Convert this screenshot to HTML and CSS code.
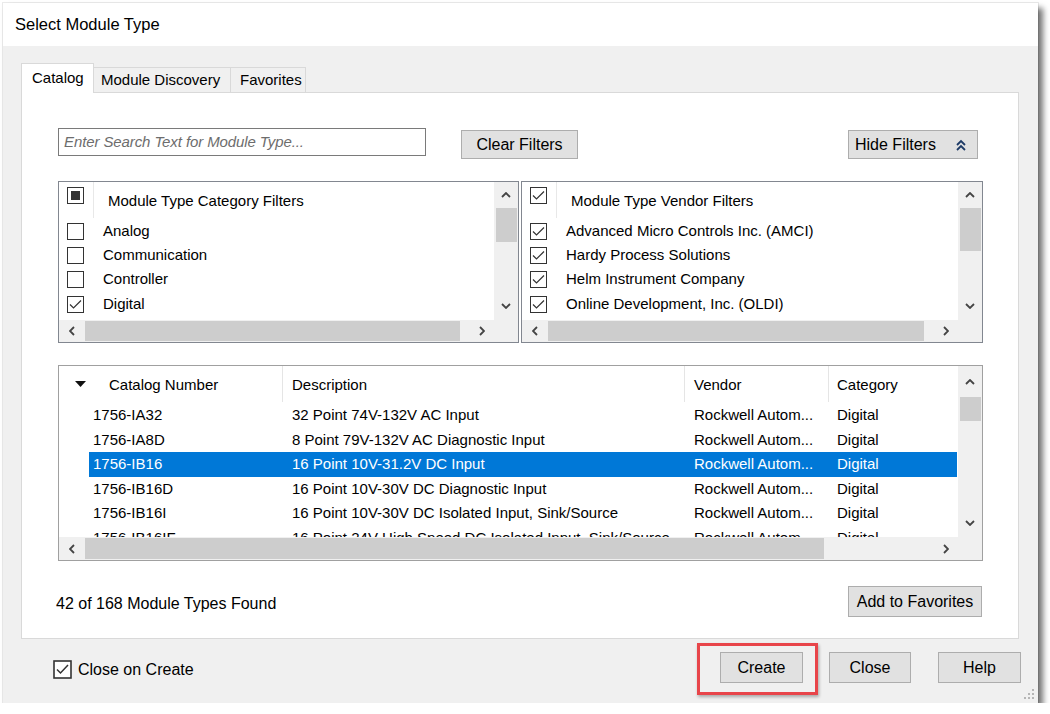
FILE: index.html
```html
<!DOCTYPE html>
<html>
<head>
<meta charset="utf-8">
<link rel="stylesheet" href="styles.css">
</head>
<body>
<div class="window">
  <div class="titlebar">Select Module Type</div>
  <div class="body">
    <div class="tabs">
      <div class="tab sel">Catalog</div>
      <div class="tab md">Module Discovery</div>
      <div class="tab fav">Favorites</div>
    </div>
    <div class="panel">
      <div class="search-row">
        <div class="search">Enter Search Text for Module Type...</div>
        <div class="btn clear">Clear Filters</div>
        <div class="btn hide">Hide Filters
          <svg class="dchev" width="12" height="12" viewBox="0 0 12 12"><polyline points="2,6 6,2 10,6" fill="none" stroke="#1d3a66" stroke-width="1.8"/><polyline points="2,11 6,7 10,11" fill="none" stroke="#1d3a66" stroke-width="1.8"/></svg>
        </div>
      </div>

      <div class="filters">
        <div class="fbox cat">
          <div class="fmain">
            <div class="flist">
              <div class="fhead">
                <svg class="cb hcb" width="17" height="17" viewBox="0 0 17 17"><rect x="0.5" y="0.5" width="16" height="16" fill="#fff" stroke="#333"/><rect x="4" y="4" width="9" height="9" fill="#333"/></svg>
                <div class="fsep"></div>
                <div class="ftitle">Module Type Category Filters</div>
              </div>
              <div class="frow"><svg class="cb" width="17" height="17" viewBox="0 0 17 17"><rect x="0.5" y="0.5" width="16" height="16" fill="#fff" stroke="#333"/></svg><span>Analog</span></div>
              <div class="frow"><svg class="cb" width="17" height="17" viewBox="0 0 17 17"><rect x="0.5" y="0.5" width="16" height="16" fill="#fff" stroke="#333"/></svg><span>Communication</span></div>
              <div class="frow"><svg class="cb" width="17" height="17" viewBox="0 0 17 17"><rect x="0.5" y="0.5" width="16" height="16" fill="#fff" stroke="#333"/></svg><span>Controller</span></div>
              <div class="frow"><svg class="cb" width="17" height="17" viewBox="0 0 17 17"><rect x="0.5" y="0.5" width="16" height="16" fill="#fff" stroke="#333"/><polyline points="3,8.5 6.5,12 14,4.5" fill="none" stroke="#333" stroke-width="1.2"/></svg><span>Digital</span></div>
            </div>
            <div class="vscroll">
              <div class="sbtn up"><svg width="10" height="6" viewBox="0 0 10 6"><polyline points="1,5 5,1 9,5" fill="none" stroke="#444" stroke-width="1.8"/></svg></div>
              <div class="vthumb t-cat"></div>
              <div class="sbtn down"><svg width="10" height="6" viewBox="0 0 10 6"><polyline points="1,1 5,5 9,1" fill="none" stroke="#444" stroke-width="1.8"/></svg></div>
            </div>
          </div>
          <div class="hscroll">
            <div class="hbtn left"><svg width="6" height="10" viewBox="0 0 6 10"><polyline points="5,1 1,5 5,9" fill="none" stroke="#444" stroke-width="1.8"/></svg></div>
            <div class="htrack"><div class="hthumb flex"></div></div>
            <div class="hbtn right"><svg width="6" height="10" viewBox="0 0 6 10"><polyline points="1,1 5,5 1,9" fill="none" stroke="#444" stroke-width="1.8"/></svg></div>
            <div class="corner"></div>
          </div>
        </div>

        <div class="fbox ven">
          <div class="fmain">
            <div class="flist">
              <div class="fhead">
                <svg class="cb hcb" width="17" height="17" viewBox="0 0 17 17"><rect x="0.5" y="0.5" width="16" height="16" fill="#fff" stroke="#333"/><polyline points="3,8.5 6.5,12 14,4.5" fill="none" stroke="#333" stroke-width="1.2"/></svg>
                <div class="fsep"></div>
                <div class="ftitle">Module Type Vendor Filters</div>
              </div>
              <div class="frow"><svg class="cb" width="17" height="17" viewBox="0 0 17 17"><rect x="0.5" y="0.5" width="16" height="16" fill="#fff" stroke="#333"/><polyline points="3,8.5 6.5,12 14,4.5" fill="none" stroke="#333" stroke-width="1.2"/></svg><span>Advanced Micro Controls Inc. (AMCI)</span></div>
              <div class="frow"><svg class="cb" width="17" height="17" viewBox="0 0 17 17"><rect x="0.5" y="0.5" width="16" height="16" fill="#fff" stroke="#333"/><polyline points="3,8.5 6.5,12 14,4.5" fill="none" stroke="#333" stroke-width="1.2"/></svg><span>Hardy Process Solutions</span></div>
              <div class="frow"><svg class="cb" width="17" height="17" viewBox="0 0 17 17"><rect x="0.5" y="0.5" width="16" height="16" fill="#fff" stroke="#333"/><polyline points="3,8.5 6.5,12 14,4.5" fill="none" stroke="#333" stroke-width="1.2"/></svg><span>Helm Instrument Company</span></div>
              <div class="frow"><svg class="cb" width="17" height="17" viewBox="0 0 17 17"><rect x="0.5" y="0.5" width="16" height="16" fill="#fff" stroke="#333"/><polyline points="3,8.5 6.5,12 14,4.5" fill="none" stroke="#333" stroke-width="1.2"/></svg><span>Online Development, Inc. (OLDI)</span></div>
            </div>
            <div class="vscroll">
              <div class="sbtn up"><svg width="10" height="6" viewBox="0 0 10 6"><polyline points="1,5 5,1 9,5" fill="none" stroke="#444" stroke-width="1.8"/></svg></div>
              <div class="vthumb t-ven"></div>
              <div class="sbtn down"><svg width="10" height="6" viewBox="0 0 10 6"><polyline points="1,1 5,5 9,1" fill="none" stroke="#444" stroke-width="1.8"/></svg></div>
            </div>
          </div>
          <div class="hscroll">
            <div class="hbtn left"><svg width="6" height="10" viewBox="0 0 6 10"><polyline points="5,1 1,5 5,9" fill="none" stroke="#444" stroke-width="1.8"/></svg></div>
            <div class="htrack"><div class="hthumb flex"></div></div>
            <div class="hbtn right"><svg width="6" height="10" viewBox="0 0 6 10"><polyline points="1,1 5,5 1,9" fill="none" stroke="#444" stroke-width="1.8"/></svg></div>
            <div class="corner"></div>
          </div>
        </div>
      </div>

      <div class="grid">
        <div class="gmain">
          <div class="gbody">
            <div class="ghead">
              <div class="hc hc1"><svg class="sort" width="11" height="6" viewBox="0 0 11 6"><polygon points="0,0 11,0 5.5,6" fill="#111"/></svg><span>Catalog Number</span></div>
              <div class="hc hc2">Description</div>
              <div class="hc hc3">Vendor</div>
              <div class="hc hc4">Category</div>
            </div>
            <div class="grow"><div class="c c1">1756-IA32</div><div class="c c2">32 Point 74V-132V AC Input</div><div class="c c3">Rockwell Autom...</div><div class="c c4">Digital</div></div>
            <div class="grow"><div class="c c1">1756-IA8D</div><div class="c c2">8 Point 79V-132V AC Diagnostic Input</div><div class="c c3">Rockwell Autom...</div><div class="c c4">Digital</div></div>
            <div class="grow selected"><div class="c c1">1756-IB16</div><div class="c c2">16 Point 10V-31.2V DC Input</div><div class="c c3">Rockwell Autom...</div><div class="c c4">Digital</div></div>
            <div class="grow"><div class="c c1">1756-IB16D</div><div class="c c2">16 Point 10V-30V DC Diagnostic Input</div><div class="c c3">Rockwell Autom...</div><div class="c c4">Digital</div></div>
            <div class="grow"><div class="c c1">1756-IB16I</div><div class="c c2">16 Point 10V-30V DC Isolated Input, Sink/Source</div><div class="c c3">Rockwell Autom...</div><div class="c c4">Digital</div></div>
            <div class="grow"><div class="c c1">1756-IB16IF</div><div class="c c2">16 Point 24V High Speed DC Isolated Input, Sink/Source</div><div class="c c3">Rockwell Autom...</div><div class="c c4">Digital</div></div>
          </div>
          <div class="vscroll">
            <div class="sbtn gup"><svg width="10" height="6" viewBox="0 0 10 6"><polyline points="1,5 5,1 9,5" fill="none" stroke="#444" stroke-width="1.8"/></svg></div>
            <div class="vthumb t-grid"></div>
            <div class="sbtn down gdown"><svg width="10" height="6" viewBox="0 0 10 6"><polyline points="1,1 5,5 9,1" fill="none" stroke="#444" stroke-width="1.8"/></svg></div>
          </div>
        </div>
        <div class="hscroll ghs">
          <div class="hbtn left"><svg width="6" height="10" viewBox="0 0 6 10"><polyline points="5,1 1,5 5,9" fill="none" stroke="#444" stroke-width="1.8"/></svg></div>
          <div class="htrack"><div class="hthumb gthumb"></div></div>
          <div class="hbtn right"><svg width="6" height="10" viewBox="0 0 6 10"><polyline points="1,1 5,5 1,9" fill="none" stroke="#444" stroke-width="1.8"/></svg></div>
          <div class="corner"></div>
        </div>
      </div>

      <div class="found-row">
        <div class="found">42 of 168 Module Types Found</div>
        <div class="btn addfav">Add to Favorites</div>
      </div>
    </div>

    <div class="bottom">
      <div class="coc">
        <svg width="19" height="19" viewBox="0 0 19 19"><rect x="1" y="1" width="17" height="17" fill="#fff" stroke="#333" stroke-width="1.6"/><polyline points="4,9.5 7.5,13 15,5" fill="none" stroke="#333" stroke-width="1.5"/></svg>
        <span>Close on Create</span>
      </div>
      <div class="actions">
        <div class="btn act create">Create</div>
        <div class="btn act close">Close</div>
        <div class="btn act help">Help</div>
      </div>
    </div>
  </div>
  <div class="annot"></div>
  <svg class="grip" width="12" height="12" viewBox="0 0 12 12"><g fill="#b5b5b5"><rect x="9" y="1" width="2" height="2"/><rect x="9" y="5" width="2" height="2"/><rect x="5" y="5" width="2" height="2"/><rect x="9" y="9" width="2" height="2"/><rect x="5" y="9" width="2" height="2"/><rect x="1" y="9" width="2" height="2"/></g></svg>
</div>
</body>
</html>
```

FILE: styles.css
```css
* { box-sizing: border-box; }
body {
  margin: 0;
  background: #fff;
  font-family: "Liberation Sans", Arial, sans-serif;
  color: #000;
}
.window {
  position: relative;
  margin: 3px 0 0 3px;
  width: 1035px;
  height: 700px;
  background: #f0f0f0;
  box-shadow: 0 0 0 1px rgba(0,0,0,0.08), 5px 5px 6px rgba(0,0,0,0.55);
}
.titlebar {
  height: 43px;
  background: #fff;
  padding-left: 12px;
  font-size: 16.5px;
  line-height: 42px;
}
.body {
  height: 657px;
  padding: 17px 0 0 18px;
}
.tabs {
  display: flex;
  align-items: flex-end;
  height: 29px;
}
.tab {
  height: 25px;
  border: 1px solid #d9d9d9;
  border-bottom: none;
  border-left: none;
  background: #f0f0f0;
  font-size: 15px;
  line-height: 24px;
  white-space: nowrap;
}
.tab.sel {
  position: relative;
  z-index: 1;
  height: 30px;
  margin-bottom: -1px;
  width: 73px;
  padding-left: 10px;
  border-left: 1px solid #d9d9d9;
  background: #fff;
  line-height: 27px;
}
.tab.md { width: 137px; padding-left: 7px; }
.tab.fav { width: 75px; padding-left: 9px; }
.panel {
  width: 998px;
  height: 547px;
  background: #fff;
  border: 1px solid #d9d9d9;
  padding: 35px 35px 0 36px;
}
.search-row {
  display: flex;
  align-items: flex-start;
  height: 31px;
}
.search {
  width: 368px;
  height: 28px;
  border: 1px solid #7a7a7a;
  padding-left: 5px;
  font-size: 15px;
  font-style: italic;
  color: #6d6d6d;
  line-height: 26px;
  letter-spacing: -0.1px;
}
.btn {
  height: 29px;
  background: #e1e1e1;
  border: 1px solid #adadad;
  font-size: 16px;
  line-height: 27px;
  text-align: center;
  white-space: nowrap;
}
.btn.clear { width: 117px; margin: 2px 0 0 35px; }
.btn.hide {
  width: 130px;
  margin: 2px 5px 0 auto;
  display: flex;
  align-items: center;
  padding-left: 6px;
  text-align: left;
}
.dchev { margin-left: 19px; }
.filters {
  display: flex;
  margin-top: 22px;
  height: 162px;
}
.fbox {
  height: 162px;
  border: 1px solid #828790;
  background: #fff;
  display: flex;
  flex-direction: column;
}
.fbox.cat { width: 461px; }
.fbox.ven { width: 462px; margin-left: 2px; }
.fmain { height: 138px; display: flex; }
.flist { flex: 1; overflow: hidden; font-size: 15px; }
.fhead {
  display: flex;
  align-items: flex-start;
  height: 37px;
}
.hcb { margin: 5px 0 0 8px; flex: none; }
.fsep { width: 1px; height: 36px; background: #e8e8e8; margin-left: 9px; }
.ftitle { margin-left: 14px; line-height: 38px; white-space: nowrap; }
.frow {
  display: flex;
  align-items: center;
  height: 24.4px;
  white-space: nowrap;
}
.frow .cb { margin-left: 8px; flex: none; }
.frow span { margin-left: 19px; margin-top: -2px; }
.vscroll {
  width: 24px;
  background: #f0f0f0;
  display: flex;
  flex-direction: column;
  align-items: center;
}
.sbtn {
  height: 26px;
  width: 24px;
  display: flex;
  align-items: center;
  justify-content: center;
  flex: none;
}
.sbtn.down { margin-top: auto; height: 24px; margin-bottom: 2px; }
.vthumb { width: 21px; background: #cdcdcd; flex: none; }
.t-cat { height: 34px; }
.t-ven { height: 43px; }
.hscroll {
  height: 22px;
  background: #f0f0f0;
  display: flex;
}
.hbtn {
  width: 24px;
  display: flex;
  align-items: center;
  justify-content: center;
  flex: none;
}
.hbtn.left { width: 25px; }
.htrack { flex: 1; display: flex; padding: 1px 0; }
.hthumb { background: #cdcdcd; margin-left: 1px; }
.hthumb.flex { flex: 1; margin-right: 10px; }
.corner { width: 24px; flex: none; }
.grid {
  width: 925px;
  height: 196px;
  margin-top: 22px;
  border: 1px solid #a0a0a0;
  background: #fff;
  display: flex;
  flex-direction: column;
}
.gmain { height: 171px; display: flex; }
.gbody { flex: 1; overflow: hidden; font-size: 15px; }
.ghead { display: flex; height: 37px; }
.hc {
  height: 36px;
  line-height: 37px;
  border-right: 1px solid #e5e5e5;
  white-space: nowrap;
}
.hc1 { width: 224px; display: flex; align-items: center; }
.sort { margin-left: 16px; }
.hc1 span { margin-left: 23px; }
.hc2 { width: 402px; padding-left: 9px; }
.hc3 { width: 144px; padding-left: 9px; }
.hc4 { border-right: none; padding-left: 8px; }
.grow {
  display: flex;
  margin-left: 30px;
  width: 868px;
  height: 24.5px;
  line-height: 24.5px;
  white-space: nowrap;
}
.grow.selected { background: #0078d7; color: #fff; }
.c { overflow: hidden; }
.c1 { width: 195px; padding-left: 4px; }
.c2 { width: 402px; padding-left: 8px; }
.c3 { width: 143px; padding-left: 8px; }
.c4 { width: 128px; padding-left: 8px; }
.gup { height: 31px; }
.t-grid { height: 24px; }
.gdown { margin-bottom: 3px; }
.ghs { height: 23px; }
.gthumb { width: 739px; }
.found-row {
  display: flex;
  align-items: center;
  justify-content: space-between;
  margin-top: 25px;
  height: 31px;
}
.found { font-size: 16px; margin-left: -2px; padding-top: 5px; }
.btn.addfav { width: 134px; height: 31px; line-height: 29px; margin-right: 1px; }
.bottom {
  display: flex;
  align-items: flex-start;
  padding: 13px 17px 0 32px;
}
.coc {
  display: flex;
  align-items: center;
  margin-top: 8px;
  font-size: 16px;
  height: 19px;
}
.coc span { margin-left: 6px; }
.actions { display: flex; margin-left: auto; }
.btn.act { height: 31px; line-height: 29px; }
.create { width: 83px; }
.close { width: 82px; margin-left: 26px; }
.help { width: 83px; margin-left: 27px; }
.annot {
  position: absolute;
  left: 694px;
  top: 640px;
  width: 121px;
  height: 52px;
  border: 3px solid #e8454a;
  box-shadow: 1px 2px 3px rgba(0,0,0,0.3);
}
.grip {
  position: absolute;
  right: 3px;
  bottom: 3px;
}
```
